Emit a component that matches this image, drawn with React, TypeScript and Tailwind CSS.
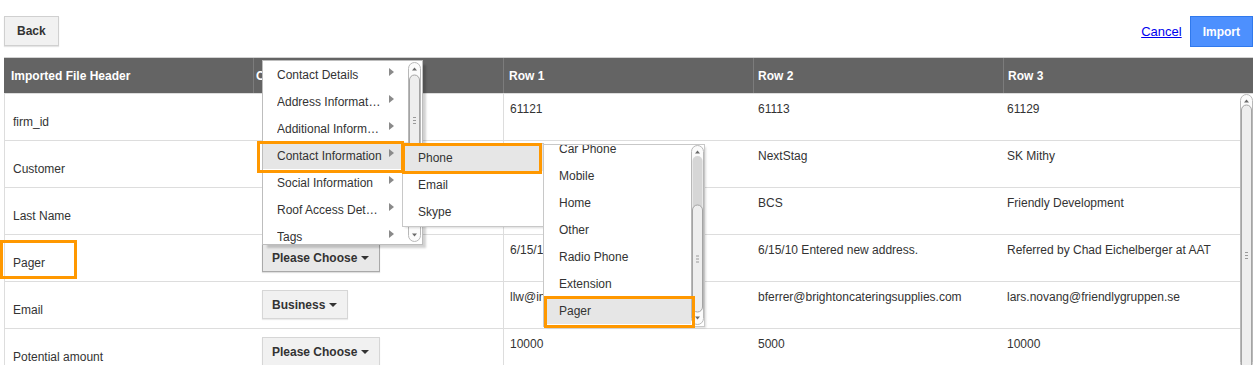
import React from "react";

const rows = [
  { header: "firm_id", field: "", r1: "61121", r2: "61113", r3: "61129" },
  { header: "Customer", field: "", r1: "NextStag", r2: "NextStag", r3: "SK Mithy" },
  { header: "Last Name", field: "", r1: "BCS", r2: "BCS", r3: "Friendly Development" },
  { header: "Pager", field: "Please Choose", r1: "6/15/10 Entered new address.", r2: "6/15/10 Entered new address.", r3: "Referred by Chad Eichelberger at AAT", active: true },
  { header: "Email", field: "Business", r1: "llw@inchargehomes.com", r2: "bferrer@brightoncateringsupplies.com", r3: "lars.novang@friendlygruppen.se" },
  { header: "Potential amount", field: "Please Choose", r1: "10000", r2: "5000", r3: "10000" },
];

const groups = ["Contact Details", "Address Information", "Additional Information", "Contact Information", "Social Information", "Roof Access Details", "Tags"];
const contactTypes = ["Phone", "Email", "Skype"];
const phoneTypes = ["Car Phone", "Mobile", "Home", "Other", "Radio Phone", "Extension", "Pager"];

const Caret = () => (
    <svg width="8" height="4" viewBox="0 0 8 4" className="shrink-0">
        <polygon points="0,0 8,0 4,4" fill="#333"/>
    </svg>
);

const SideArrow = () => (
    <svg width="5" height="8" viewBox="0 0 5 8" className="shrink-0 -mt-[5px] ml-[6px]">
        <polygon points="0,0 5,4 0,8" fill="#8a8a8a"/>
    </svg>
);

const ScrollBar = (props: { height: number, thumbTop: number, thumbHeight: number, filled?: boolean }) => {
    const {height, thumbTop, thumbHeight} = props;
    const grip = thumbTop + thumbHeight / 2;
    return (
        <svg width="13" height={height} className="shrink-0 block">
            <rect x="0.5" y="0.5" width="12" height={height - 1} rx="6" fill="#fbfbfb" stroke="#b8b8b8"/>
            <polygon points="4,8.5 9,8.5 6.5,5.5" fill="#6a6a6a"/>
            {props.filled && <rect x="1.5" y="11" width="10" height={thumbTop - 11 + 8} rx="5" fill="#d6d6d6"/>}
            <rect x="1.5" y={thumbTop} width="10" height={thumbHeight} rx="5" fill="#eeeeee" stroke="#a4a4a4"/>
            {grip < height - 10 && <>
                <line x1="5" x2="8" y1={grip - 2.5} y2={grip - 2.5} stroke="#9a9a9a"/>
                <line x1="5" x2="8" y1={grip + 0.5} y2={grip + 0.5} stroke="#9a9a9a"/>
                <line x1="5" x2="8" y1={grip + 3.5} y2={grip + 3.5} stroke="#9a9a9a"/>
            </>}
            {height < 250 && <polygon points={`4,${height - 8.5} 9,${height - 8.5} 6.5,${height - 5.5}`} fill="#6a6a6a"/>}
        </svg>
    );
};

const FieldButton = (props: { label: string, active?: boolean }) => (
    <button
        className={props.active
            ? "h-[29px] flex items-center gap-[4px] pl-[9px] pr-[10px] border border-[#a9a9a9] bg-[#e8e8e8] font-bold text-[#333] shadow-[0_1px_1px_rgba(0,0,0,0.12)]"
            : "h-[29px] flex items-center gap-[4px] pl-[9px] pr-[10px] border border-[#d6d6d6] bg-[#f1f1f1] font-bold text-[#333] shadow-[0_1px_1px_rgba(0,0,0,0.08)]"}>
        {props.label}
        <Caret/>
    </button>
);

export default function App() {
    return (
        <div className="relative h-[365px] w-[1255px] overflow-hidden bg-white font-['Liberation_Sans',Arial,sans-serif] text-[12px] leading-[18px] text-[#333]">
            <div className="flex items-start justify-between pl-1 pr-[2px] pt-4">
                <button
                    className="h-[30px] px-[12px] border border-[#d0d0d0] bg-[#f1f1f1] font-bold text-[#333] shadow-[0_1px_1px_rgba(0,0,0,0.1)]">
                    Back
                </button>
                <div className="flex items-center gap-2">
                    <a href="#" className="text-[13px] text-[#0000ee] underline">Cancel</a>
                    <button className="h-[31px] px-[12px] border border-[#3079ed] bg-[#4d90fe] font-bold text-white">
                        Import
                    </button>
                </div>
            </div>

            <div className="ml-1 mt-[10px] w-[1249px]">
                <div className="flex h-[37px] border-y border-t-[#d2d2d2] border-b-[#dddddd] bg-[#646464] font-bold text-white">
                    <div className="w-[249px] flex items-center pl-[7px]">Imported File Header</div>
                    <div className="w-[250px] flex items-center pl-[2px] border-l border-[#7c7c7c]">Contact Field</div>
                    <div className="w-[250px] flex items-center pl-[5px] border-l border-[#7c7c7c]">Row 1</div>
                    <div className="w-[250px] flex items-center pl-[4px] border-l border-[#7c7c7c]">Row 2</div>
                    <div className="w-[250px] flex items-center pl-[4px] border-l border-[#7c7c7c]">Row 3</div>
                </div>

                <div className="flex">
                    <div className="w-[499px] border-l border-[#dddddd]">
                        {rows.map(r => (
                            <div key={r.header} className="flex h-[47px] border-b border-[#dddddd]">
                                <div className="w-[248px] pl-2 pt-[19px]">{r.header}</div>
                                <div className="w-[250px] pl-[9px] pt-2">
                                    {r.field && <FieldButton label={r.field} active={r.active}/>}
                                </div>
                            </div>
                        ))}
                    </div>
                    <div className="flex flex-1 border-l border-[#dddddd]">
                        <div className="flex-1">
                            {rows.map(r => (
                                <div key={r.header} className="flex h-[47px] border-b border-[#dddddd]">
                                    <div className="w-[249px] pl-[6px] pt-[6px] whitespace-nowrap overflow-hidden">{r.r1}</div>
                                    <div className="w-[250px] pl-[5px] pt-[6px] whitespace-nowrap overflow-hidden">{r.r2}</div>
                                    <div className="flex-1 pl-[4px] pt-[6px] whitespace-nowrap overflow-hidden">{r.r3}</div>
                                </div>
                            ))}
                        </div>
                        <ScrollBar height={275} thumbTop={11} thumbHeight={300}/>
                    </div>
                </div>
            </div>

            {/* group menu */}
            <div
                className="absolute left-[262px] top-[60px] flex h-[185px] w-[161px] border border-[#bdbdbd] bg-white shadow-[4px_4px_2px_-1px_rgba(0,0,0,0.18)]">
                <div className="w-[145px] overflow-hidden">
                    {groups.map(g => (
                        <div key={g}
                             className={`flex h-[27px] shrink-0 items-center pl-[14px] ${g === "Contact Information" ? "bg-[#e6e6e6]" : ""}`}>
                            <span className="w-[106px] truncate">{g}</span>
                            <SideArrow/>
                        </div>
                    ))}
                </div>
                <div className="pt-[1px]">
                    <ScrollBar height={180} thumbTop={13} thumbHeight={90}/>
                </div>
            </div>

            {/* contact information submenu */}
            <div
                className="absolute left-[402px] top-[143px] h-[84px] w-[142px] border border-[#c8c8c8] bg-white shadow-[2px_2px_2px_-1px_rgba(0,0,0,0.15)]">
                {contactTypes.map(c => (
                    <div key={c} className={`flex h-[27px] items-center pl-[15px] ${c === "Phone" ? "bg-[#e6e6e6]" : ""}`}>{c}</div>
                ))}
            </div>

            {/* phone type list */}
            <div
                className="absolute left-[543px] top-[144px] flex h-[183px] w-[162px] border border-[#c8c8c8] bg-white shadow-[2px_2px_2px_-1px_rgba(0,0,0,0.15)]">
                <div className="w-[147px] overflow-hidden">
                    <div className="-mt-[10px]">
                        {phoneTypes.map(p => (
                            <div key={p} className={`flex h-[27px] items-center pl-[15px] ${p === "Pager" ? "bg-[#e6e6e6]" : ""}`}>{p}</div>
                        ))}
                    </div>
                </div>
                <ScrollBar height={180} thumbTop={60} thumbHeight={107} filled/>
            </div>

            {/* highlight marks */}
            <div className="pointer-events-none absolute left-0 top-[240px] h-[39px] w-[77px] border-[3px] border-[#ff9800]"/>
            <div className="pointer-events-none absolute left-[257px] top-[141px] h-[32px] w-[147px] border-[3px] border-[#ff9800]"/>
            <div className="pointer-events-none absolute left-[402px] top-[143px] h-[31px] w-[140px] border-[3px] border-[#ff9800]"/>
            <div className="pointer-events-none absolute left-[544px] top-[296px] h-[32px] w-[151px] border-[3px] border-[#ff9800]"/>
        </div>
    );
}
